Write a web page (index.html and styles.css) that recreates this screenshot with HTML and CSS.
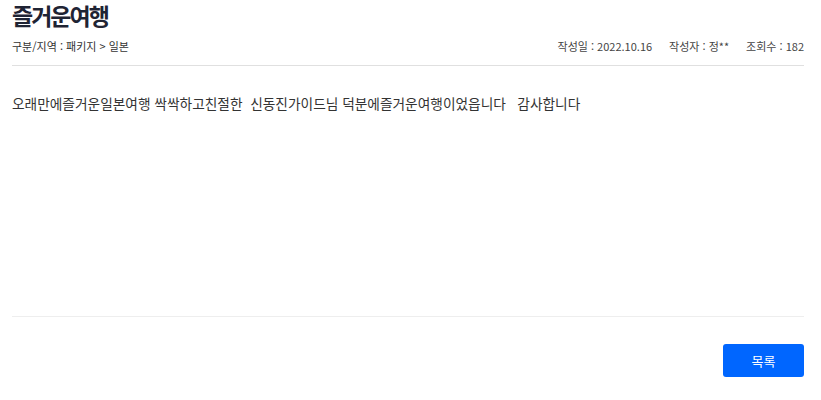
FILE: index.html
```html
<!DOCTYPE html>
<html lang="ko">

<head>
    <meta charset="utf-8">
    <title>즐거운여행</title>
    <link rel="stylesheet" href="styles.css">
</head>

<body>
    <div class="board">
        <div class="boardHead">
            <h2 class="boardTitle">즐거운여행</h2>
            <div class="boardMeta">
                <span class="category">구분/지역 : 패키지 &gt; 일본</span>
                <ul class="info">
                    <li>작성일 : 2022.10.16</li>
                    <li>작성자 : 정**</li>
                    <li>조회수 : 182</li>
                </ul>
            </div>
        </div>

        <div class="boardBody">
            <p>오래만에즐거운일본여행 싹싹하고친절한&nbsp; 신동진가이드님 덕분에즐거운여행이었읍니다 &nbsp; 감사합니다</p>
        </div>

        <div class="boardFoot">
            <button class="listButton">목록</button>
        </div>
    </div>
</body>

</html>
```

FILE: styles.css
```css
body {
    margin: 0;
    font-family: "Noto Sans CJK KR", "Noto Sans", sans-serif;
    color: #333;
    background-color: #fff;
}

.board {
    width: 792px;
    margin-left: 12px;
}

.boardHead {
    border-bottom: 1px solid #e0e0e0;
}

.boardTitle {
    margin: 0;
    font-size: 23px;
    line-height: 30px;
    font-weight: 700;
    letter-spacing: -2px;
    color: #1f2434;
}

.boardMeta {
    display: flex;
    justify-content: space-between;
    align-items: center;
    font-size: 11px;
    line-height: 16px;
    color: #333;
    padding: 8px 0 11px;
}

.info {
    display: flex;
    gap: 17px;
    list-style: none;
    margin: 0;
    padding: 0;
    color: #444;
}

.boardBody {
    height: 251px;
    box-sizing: border-box;
    padding-top: 27px;
    border-bottom: 1px solid #eee;
}

.boardBody p {
    margin: 0;
    font-size: 13.7px;
    line-height: 20px;
    color: #333;
}

.boardFoot {
    display: flex;
    justify-content: flex-end;
    padding-top: 27px;
}

.listButton {
    width: 81px;
    height: 33px;
    border: none;
    border-radius: 3px;
    background-color: #0066ff;
    color: #fff;
    font-family: inherit;
    font-size: 13px;
    cursor: pointer;
}
```
